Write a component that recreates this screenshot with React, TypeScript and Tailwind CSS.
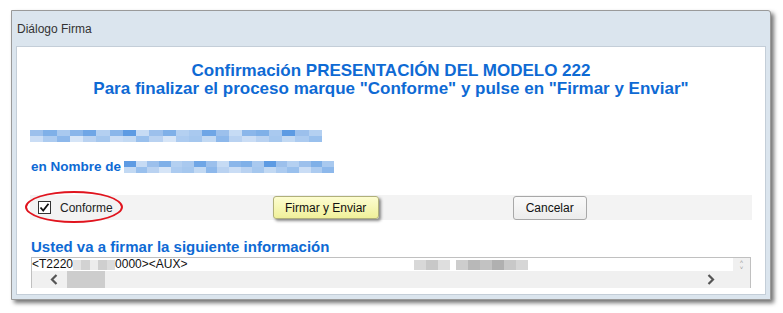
const nameBlocks = [
  "bg-[#9cc0ec]", "bg-[#7fb0e8]", "bg-[#a9c9ef]", "bg-[#8ab6ea]", "bg-[#6fa6e6]", "bg-[#b4d0f1]",
  "bg-[#8ab6ea]", "bg-[#5d9be3]", "bg-[#c6dbf4]", "bg-[#9cc0ec]", "bg-[#7fb0e8]", "bg-[#b4d0f1]",
  "bg-[#a9c9ef]", "bg-[#6fa6e6]", "bg-[#9cc0ec]", "bg-[#c6dbf4]", "bg-[#8ab6ea]", "bg-[#7fb0e8]",
  "bg-[#a9c9ef]", "bg-[#5d9be3]", "bg-[#9cc0ec]", "bg-[#b4d0f1]",
];

function Blur({ count, w, offset = 0 }: { count: number; w: string; offset?: number }) {
  return (
    <div className={`flex flex-col ${w}`}>
      <div className="flex h-[6px]">
        {Array.from({ length: count }).map((_, i) => (
          <div key={i} className={`flex-1 ${nameBlocks[(i + offset) % nameBlocks.length]}`} />
        ))}
      </div>
      <div className="flex h-[6px] opacity-70">
        {Array.from({ length: count }).map((_, i) => (
          <div key={i} className={`flex-1 ${nameBlocks[(i + offset + 5) % nameBlocks.length]}`} />
        ))}
      </div>
    </div>
  );
}

export default function App() {
  return (
    <div className="w-[783px] h-[313px] bg-white pt-[10px] pl-[11px] font-['Liberation_Sans',Arial,sans-serif]">
      <div className="w-[760px] h-[290px] flex flex-col bg-[#dbe5ee] border border-[#9a9a9a] rounded-tr-[3px] shadow-[3px_3px_4px_rgba(0,0,0,0.55)]">
        {/* Title bar */}
        <div className="h-[35px] flex items-center pl-[5px] text-[12px] text-[#333]">Diálogo Firma</div>

        {/* Body */}
        <div className="flex-1 mx-[4px] mb-[4px] bg-white border border-[#c4ced8] flex flex-col">
          <div className="pt-[15px] text-center text-[17px] leading-[18px] font-bold text-[#0e6ad4]">
            <div>Confirmación PRESENTACIÓN DEL MODELO 222</div>
            <div>Para finalizar el proceso marque "Conforme" y pulse en "Firmar y Enviar"</div>
          </div>

          <div className="mt-[32px] ml-[13px]">
            <Blur count={22} w="w-[292px]" />
          </div>

          <div className="mt-[17px] ml-[14px] h-[16px] flex items-center gap-[3px]">
            <span className="text-[13.5px] font-bold text-[#0e6ad4]">en Nombre de</span>
            <Blur count={18} w="w-[210px]" offset={7} />
          </div>

          {/* Action row */}
          <div className="mt-[20px] mx-[13px] h-[25px] bg-[#f3f3f3] flex items-center relative">
            <div className="absolute left-[-5px] top-[-4px] w-[98px] h-[32px] rounded-[50%] border-2 border-[#e0141e]" />
            <div className="ml-[8px] w-[13px] h-[13px] border border-[#333] bg-white flex items-center justify-center">
              <svg width="11" height="11" viewBox="0 0 11 11">
                <path d="M1.5 5.5 L4.2 8.5 L9.5 1.8" fill="none" stroke="#111" strokeWidth="1.8" />
              </svg>
            </div>
            <span className="ml-[9px] text-[12px] text-[#222]">Conforme</span>
            <button className="ml-[160px] w-[106px] h-[23px] rounded-[3px] border border-[#b0b07a] bg-gradient-to-b from-[#fdfdd0] to-[#f0f09a] text-[12px] text-[#111] shadow-[2px_2px_3px_rgba(0,0,0,0.45)]">
              Firmar y Enviar
            </button>
            <button className="ml-[134px] w-[74px] h-[24px] rounded-[3px] border border-[#a8a8a8] bg-gradient-to-b from-[#fafafa] to-[#ececec] text-[12px] text-[#111]">
              Cancelar
            </button>
          </div>

          <div className="mt-[19px] ml-[14px] text-[15px] leading-[16px] font-bold text-[#0e6ad4]">
            Usted va a firmar la siguiente información
          </div>

          {/* Text area */}
          <div className="mt-[2px] mx-[14px] h-[31px] border border-[#c0c0c0] flex flex-col">
            <div className="h-[13px] flex">
              <div className="flex-1 flex items-center text-[12px] leading-[13px] text-[#111] whitespace-nowrap">
                <span>&lt;T2220</span>
                <span className="flex h-[10px] w-[42px]">
                  <span className="flex-1 bg-[#e4e4e4]" />
                  <span className="flex-1 bg-[#d2d2d2]" />
                  <span className="flex-1 bg-[#ececec]" />
                  <span className="flex-1 bg-[#cfcfcf]" />
                  <span className="flex-1 bg-[#dcdcdc]" />
                </span>
                <span>0000&gt;&lt;AUX&gt;</span>
                <span className="ml-[227px] flex h-[10px] w-[36px]">
                  <span className="flex-1 bg-[#d8d8d8]" />
                  <span className="flex-1 bg-[#c8c8c8]" />
                  <span className="flex-1 bg-[#dedede]" />
                </span>
                <span className="ml-[6px] flex h-[10px] w-[72px]">
                  <span className="flex-1 bg-[#cdcdcd]" />
                  <span className="flex-1 bg-[#b8b8b8]" />
                  <span className="flex-1 bg-[#c2c2c2]" />
                  <span className="flex-1 bg-[#b0b0b0]" />
                  <span className="flex-1 bg-[#c8c8c8]" />
                  <span className="flex-1 bg-[#d6d6d6]" />
                </span>
              </div>
              <div className="w-[17px] bg-[#f0f0f0] flex flex-col items-center justify-center text-[6px] leading-[6px] text-[#999]">
                <span>˄</span>
                <span>˅</span>
              </div>
            </div>
            <div className="flex-1 bg-[#f0f0f0] flex items-center">
              <svg className="ml-[18px]" width="8" height="11" viewBox="0 0 8 11">
                <path d="M6.5 1 L2 5.5 L6.5 10" fill="none" stroke="#555" strokeWidth="2.2" />
              </svg>
              <div className="ml-[9px] w-[38px] h-[17px] bg-[#cdcdcd]" />
              <div className="flex-1" />
              <svg className="mr-[35px]" width="8" height="11" viewBox="0 0 8 11">
                <path d="M1.5 1 L6 5.5 L1.5 10" fill="none" stroke="#555" strokeWidth="2.2" />
              </svg>
            </div>
          </div>
        </div>
      </div>
    </div>
  );
}
